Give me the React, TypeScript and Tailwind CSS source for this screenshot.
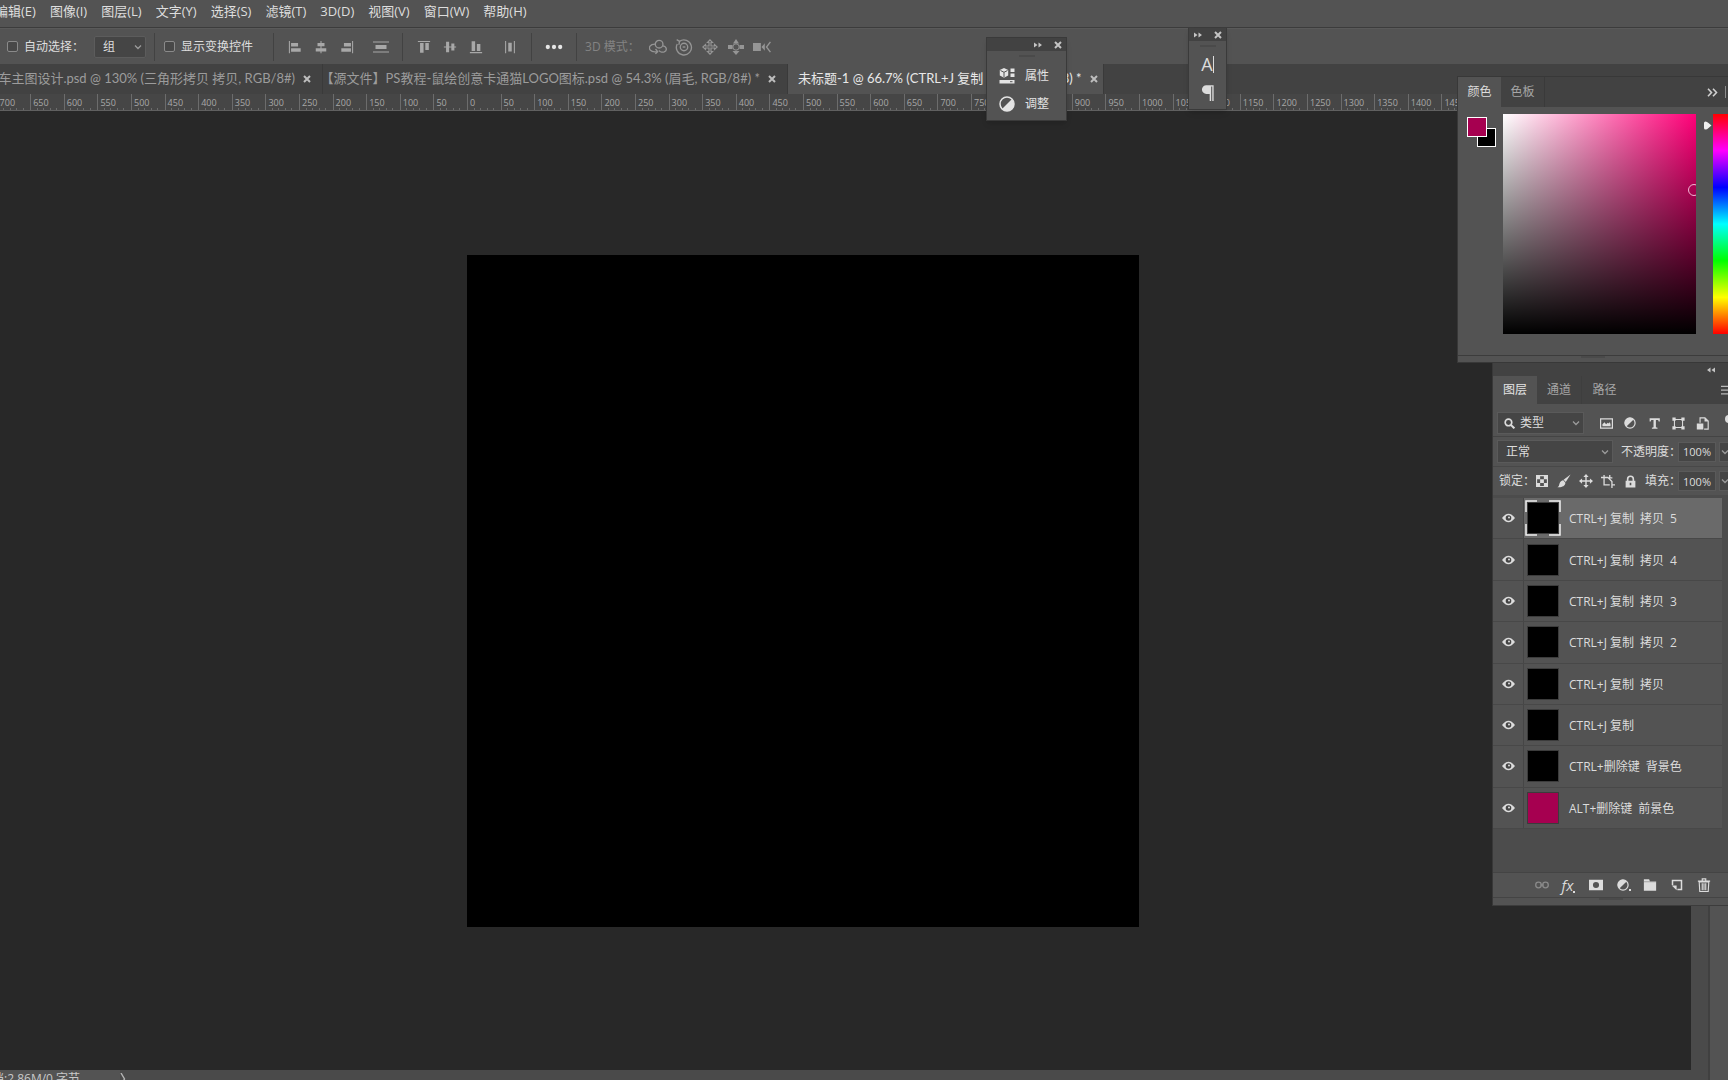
import type { ReactNode } from "react";
import { clsx } from "clsx";

const MENUS = ["编辑(E)", "图像(I)", "图层(L)", "文字(Y)", "选择(S)", "滤镜(T)", "3D(D)", "视图(V)", "窗口(W)", "帮助(H)"];

const LAYERS = [
  { name: ["CTRL+J 复制", "拷贝", "5"], color: "bg-black", selected: true },
  { name: ["CTRL+J 复制", "拷贝", "4"], color: "bg-black" },
  { name: ["CTRL+J 复制", "拷贝", "3"], color: "bg-black" },
  { name: ["CTRL+J 复制", "拷贝", "2"], color: "bg-black" },
  { name: ["CTRL+J 复制", "拷贝"], color: "bg-black" },
  { name: ["CTRL+J 复制"], color: "bg-black" },
  { name: ["CTRL+删除键", "背景色"], color: "bg-black" },
  { name: ["ALT+删除键", "前景色"], color: "bg-[#a60050]" },
];

// 1000px either side of the origin, then the part past the document
const RULER = Array.from({ length: 60 }, (_, i) => Math.abs(i - 20) * 50);

interface IconProps {
  size?: number;
  className?: string;
  children: ReactNode;
}

function Icon({ size = 16, className, children }: IconProps) {
  return (
    <svg width={size} height={size} viewBox="0 0 16 16" fill="currentColor" className={clsx("shrink-0", className)} aria-hidden="true">
      {children}
    </svg>
  );
}

function Chevron({ className }: { className?: string }) {
  return (
    <svg width="8" height="8" viewBox="0 0 8 8" fill="none" stroke="#9b9b9b" strokeWidth="1.3" className={clsx("shrink-0", className)} aria-hidden="true">
      <path d="M1 2.5 4 5.5 7 2.5" />
    </svg>
  );
}

function CloseIcon() {
  return (
    <svg width="8" height="8" viewBox="0 0 8 8" stroke="currentColor" strokeWidth="2" aria-hidden="true">
      <path d="M1 1l6 6M7 1 1 7" />
    </svg>
  );
}

function DoubleArrow({ flip }: { flip?: boolean }) {
  return (
    <svg width="8" height="6" viewBox="0 0 8 6" fill="#c4c4c4" className={clsx(flip && "rotate-180")} aria-hidden="true">
      <path d="M0 0.5 3.5 3 0 5.5zM4.5 0.5 8 3 4.5 5.5z" />
    </svg>
  );
}

function Tool({ label, className, children }: { label: string; className?: string; children: ReactNode }) {
  return (
    <button aria-label={label} className={clsx("flex shrink-0 items-center justify-center", className)}>
      {children}
    </button>
  );
}

function Divider() {
  return <span className="h-7 w-px shrink-0 bg-[#424242]" />;
}

function HalfCircle() {
  return (
    <>
      <circle cx="8" cy="8" r="6.8" fill="none" stroke="currentColor" strokeWidth="1.6" />
      <path d="M12.8 3.2A6.8 6.8 0 1 0 3.2 12.8z" />
    </>
  );
}

function MenuBar() {
  return (
    <nav className="flex h-7 shrink-0 items-center gap-3.5 overflow-hidden border-b border-[#3c3c3c] bg-[#535353] pb-1 text-[13px] text-[#dedede]">
      {MENUS.map((item, i) => (
        <button key={item} className={clsx("shrink-0 whitespace-nowrap", i === 0 && "-ml-[5px]")}>
          {item}
        </button>
      ))}
    </nav>
  );
}

function OptionsBar() {
  return (
    <div className="flex h-9 shrink-0 items-center border-t border-[#5a5a5a] bg-[#535353] text-xs text-[#dedede]">
      <label className="ml-[7px] flex items-center gap-1.5">
        <input type="checkbox" className="size-[11px] appearance-none rounded-xs border border-[#8a8a8a] bg-[#484848]" />
        自动选择：
      </label>
      <div className="relative ml-2.5 flex w-[52px] items-center">
        <select aria-label="自动选择" className="h-[22px] w-full appearance-none rounded-xs border border-[#5c5c5c] bg-[#454545] pl-2 text-xs">
          <option>组</option>
        </select>
        <Chevron className="absolute right-1" />
      </div>
      <div className="mr-[9px] ml-2 flex">
        <Divider />
      </div>
      <label className="flex items-center gap-1.5">
        <input type="checkbox" className="size-[11px] appearance-none rounded-xs border border-[#8a8a8a] bg-[#484848]" />
        显示变换控件
      </label>
      <div className="ml-5 flex">
        <Divider />
      </div>
      <div className="ml-2 flex items-center text-[#a8a8a8]">
        <Tool label="左对齐" className="w-[26px]">
          <Icon size={14}><path d="M1 1h1.2v14H1zM3.5 3.5h8v4h-8zM3.5 9.5h11v4h-11z" /></Icon>
        </Tool>
        <Tool label="水平居中对齐" className="w-[26px]">
          <Icon size={14}><path d="M7.4 1h1.2v14H7.4zM4 3.5h8v3.5H4zM2 9.5h12V13H2z" /></Icon>
        </Tool>
        <Tool label="右对齐" className="w-[26px]">
          <Icon size={14}><path d="M13.8 1H15v14h-1.2zM4.5 3.5h8v4h-8zM1.5 9.5h11v4h-11z" /></Icon>
        </Tool>
        <Tool label="按垂直居中分布" className="w-[42px]">
          <Icon><path d="M0 2.4h16v1.2H0zM0 12.4h16v1.2H0zM2.5 6h11v4h-11z" /></Icon>
        </Tool>
        <Divider />
        <Tool label="顶对齐" className="ml-2 w-[26px]">
          <Icon size={14}><path d="M1 1h14v1.2H1zM3.5 3.5h4v11h-4zM9.5 3.5h4v8h-4z" /></Icon>
        </Tool>
        <Tool label="垂直居中对齐" className="w-[26px]">
          <Icon size={14}><path d="M1 7.4h14v1.2H1zM3.5 2H7v12H3.5zM9.5 4H13v8H9.5z" /></Icon>
        </Tool>
        <Tool label="底对齐" className="w-[26px]">
          <Icon size={14}><path d="M1 13.8h14V15H1zM3 1.5h4v11H3zM9 4.5h4v8H9z" /></Icon>
        </Tool>
        <Tool label="按水平居中分布" className="w-[42px]">
          <Icon size={14}><path d="M2.4 1h1.2v14H2.4zM12.4 1h1.2v14h-1.2zM6 3h4v10H6z" /></Icon>
        </Tool>
        <Divider />
        <Tool label="更多" className="w-11 text-[#e6e6e6]">
          <Icon size={18}><circle cx="2.5" cy="8" r="1.9" /><circle cx="8" cy="8" r="1.9" /><circle cx="13.5" cy="8" r="1.9" /></Icon>
        </Tool>
        <Divider />
      </div>
      <span className="ml-2 text-[#838383]">3D 模式：</span>
      <div className="ml-2 flex items-center gap-1.5 text-[#959595]">
        <Tool label="旋转 3D 对象" className="w-5">
          <Icon size={18}>
            <g fill="none" stroke="currentColor" strokeWidth="1.2">
              <circle cx="9" cy="5.5" r="3.4" />
              <path d="M5.3 5.5C1 5.500-.8 8.500 1.200 10.800c1.300 1.500 3.600 1.700 5.600 1.400M12.500 7c3.500.8 3.800 4.200 1 5.300-2 .7-4 0-4.500-1.300M5.800 9.800l1.900 2.300-2 2" />
            </g>
          </Icon>
        </Tool>
        <Tool label="滚动 3D 对象" className="w-5">
          <Icon size={18}>
            <g fill="none" stroke="currentColor" strokeWidth="1.2">
              <path d="M4 3a6.700 6.700 0 1 1-2 2.300M1.500 1.500 4 3l-.5 3" />
              <circle cx="8" cy="8" r="3.300" />
              <path d="M6.800 8h2.400" />
            </g>
          </Icon>
        </Tool>
        <Tool label="拖动 3D 对象" className="w-5">
          <Icon>
            <path fill="none" stroke="currentColor" strokeWidth="1.2" d="M8 .8 10.500 3.500H9v3.500h3.500V5.500L15.200 8l-2.700 2.500V9H9v3.500h1.500L8 15.200 5.500 12.500H7V9H3.500v1.500L.8 8l2.700-2.500V7H7V3.500H5.500z" />
          </Icon>
        </Tool>
        <Tool label="滑动 3D 对象" className="w-5">
          <Icon>
            <path d="M8 0l3 4.500H5zM8 16l-3.500-4h7zM0 6h4.500v4H0zM11.500 6H16v4h-4.500z" />
            <circle cx="8" cy="8" r="3.200" fill="none" stroke="currentColor" />
          </Icon>
        </Tool>
        <Tool label="缩放 3D 对象" className="w-5">
          <Icon size={18}>
            <path d="M0 4.500h7v7H0zM7.500 8l3-3.300v6.600z" />
            <path fill="none" stroke="currentColor" strokeWidth="1.200" d="M15.500 3.500 12 8l3.500 4.500" />
          </Icon>
        </Tool>
      </div>
    </div>
  );
}

function DocTab({ title, active, className }: { title: string; active?: boolean; className?: string }) {
  return (
    <div
      className={clsx(
        "flex h-full shrink-0 items-center gap-2 border-r border-[#3a3a3a] whitespace-nowrap",
        active ? "bg-[#535353] text-[#e8e8e8]" : "text-[#9c9c9c]",
        className
      )}
    >
      <button>{title}</button>
      <button aria-label="关闭" className="text-[#bdbdbd]">
        <CloseIcon />
      </button>
    </div>
  );
}

function DocumentTabs() {
  return (
    <div className="flex h-[30px] shrink-0 items-center overflow-hidden bg-[#424242] font-['Lato','Noto_Sans_CJK_SC',sans-serif] text-[13px]">
      <div className="flex h-full w-[323px] shrink-0 justify-end">
        <DocTab title="直通车主图设计.psd @ 130% (三角形拷贝 拷贝, RGB/8#)" className="pr-[11px]" />
      </div>
      <div className="flex h-full w-[465px] shrink-0 justify-end">
        <DocTab title="【源文件】PS教程-鼠绘创意卡通猫LOGO图标.psd @ 54.3% (眉毛, RGB/8#) *" className="pr-[11px]" />
      </div>
      <DocTab active title="未标题-1 @ 66.7% (CTRL+J 复制 拷贝 5, RGB/8) *" className="w-[316px] justify-between pr-[11px] pl-[10px]" />
    </div>
  );
}

function Ruler() {
  return (
    <div className="h-[17px] shrink-0 overflow-hidden border-b border-[#606060] bg-[#464646] text-[9px] text-[#a8a8a8]">
      <div className="-ml-[205px] grid h-full w-[2016px] grid-cols-60">
        {RULER.map((value, i) => (
          <div key={i} className="flex flex-col justify-between border-l border-[#6c6c6c] pt-[3px]">
            <span className="pl-0.5 leading-[11px]">{value}</span>
            <span className="grid h-0.5 grid-cols-5">
              {[0, 1, 2, 3].map((tick) => (
                <span key={tick} className="border-r border-[#6c6c6c]" />
              ))}
            </span>
          </div>
        ))}
      </div>
    </div>
  );
}

function PanelHeader() {
  return (
    <div className="flex h-[13px] items-center justify-end gap-3 bg-[#424242] pr-1 text-[#c4c4c4]">
      <Tool label="展开">
        <DoubleArrow />
      </Tool>
      <Tool label="关闭">
        <CloseIcon />
      </Tool>
    </div>
  );
}

function Grip() {
  return <div className="mx-auto mt-1 h-0.5 w-4 bg-[#4a4a4a]" />;
}

function PropertiesPanel() {
  return (
    <section className="absolute top-[37px] left-[986px] h-[84px] w-[81px] border border-[#3a3a3a] bg-[#535353] text-xs text-[#e4e4e4] shadow-md">
      <PanelHeader />
      <Grip />
      <button className="mt-[5px] flex h-7 items-center gap-2.5 pl-3">
        <Icon>
          <path d="M5 0l4.200 2v5.500L5 9.800.8 7.500V2z" />
          <path d="M1.500 2.500 5 4.300l3.500-1.800M5 4.300v5" fill="none" stroke="#535353" strokeWidth="1" />
          <path d="M11.500.5h4v3.500h-4zM11.500 5.500h4V9h-4zM.5 12h15v3.500H.5z" />
          <path d="M11 13.200h2.500v1H11z" fill="#535353" />
        </Icon>
        属性
      </button>
      <button className="flex h-7 items-center gap-2.5 pl-3">
        <Icon>
          <circle cx="8" cy="8" r="7" fill="none" stroke="currentColor" strokeWidth="1.500" />
          <path d="M13 3 3 13a7 7 0 0 0 10-10z" />
        </Icon>
        调整
      </button>
    </section>
  );
}

function CharacterPanel() {
  return (
    <section className="absolute top-7 left-[1188px] h-[82px] w-[39px] border border-t-0 border-[#3a3a3a] bg-[#535353] text-[#dcdcdc] shadow-md">
      <PanelHeader />
      <Grip />
      <button aria-label="字符" className="mx-auto mt-1 flex h-[26px] items-center text-lg leading-none">
        A<span className="h-[17px] w-px bg-[#dcdcdc]" />
      </button>
      <Tool label="段落" className="mx-auto h-8">
        <Icon size={18}><path d="M6.500 1H13v14h-1.200V2.200h-1V15H9.500V8.800h-3a3.900 3.900 0 0 1 0-7.800z" /></Icon>
      </Tool>
    </section>
  );
}

function ColorPanel() {
  return (
    <section className="border border-r-0 border-[#383838] bg-[#535353]">
      <div className="flex h-[30px] items-stretch bg-[#424242] text-xs">
        <button className="w-[43px] bg-[#535353] text-[#dedede]">颜色</button>
        <button className="w-11 border-r border-[#3a3a3a] text-[#a6a6a6]">色板</button>
        <div className="ml-auto flex items-center gap-[7px] pr-0.5">
          <svg width="11" height="9" viewBox="0 0 11 9" fill="none" stroke="#cfcfcf" strokeWidth="1.600" aria-hidden="true">
            <path d="M1 .8 4.500 4.500 1 8.200M6 .8l3.500 3.700L6 8.200" />
          </svg>
          <span className="h-3 w-px bg-[#8c8c8c]" />
        </div>
      </div>
      <div className="flex pt-[7px] pl-[9px]">
        <div className="relative mt-[3px] h-[30px] w-[29px]">
          <button aria-label="背景色" className="absolute right-0 bottom-0 size-[19px] border border-white bg-black" />
          <button aria-label="前景色" className="absolute top-0 left-0 size-5 border border-white bg-[#a60050]" />
        </div>
        <div className="relative ml-[7px] h-[220px] w-[193px] overflow-hidden bg-[linear-gradient(to_top,#000,transparent),linear-gradient(to_right,#fff,#ff0078)]">
          <span className="absolute top-[70px] -right-1 size-3 rounded-full border border-[#f2b8d4]" />
        </div>
        <svg width="8" height="9" viewBox="0 0 8 9" fill="#efefef" className="mt-[7px] ml-2" aria-hidden="true">
          <path d="M0 2Q0 .5 1.500.5q1.500 0 3 1.500L7.500 4.500 4.500 7q-1.500 1.500-3 1.500Q0 8.500 0 7z" />
        </svg>
        <input
          type="range"
          aria-label="色相"
          className="ml-px h-[220px] min-w-0 flex-1 appearance-none bg-[linear-gradient(to_bottom,#f00,#f0f,#00f,#0ff,#0f0,#ff0,#f00)] [&::-webkit-slider-thumb]:opacity-0"
        />
      </div>
      <div className="mt-[21px] flex h-[7px] justify-center border-t border-[#3c3c3c]">
        <span className="h-0.5 w-6 bg-[#4a4a4a]" />
      </div>
    </section>
  );
}

function Percent({ label }: { label: string }) {
  return (
    <>
      <input aria-label={label} defaultValue="100%" className="h-5 w-[38px] border border-[#5a5a5a] bg-[#454545] text-center text-[11px] text-[#dedede]" />
      <Tool label={label + "滑块"} className="ml-[3px] h-5 w-[9px] justify-start! overflow-hidden border border-r-0 border-[#5a5a5a] bg-[#454545] pl-px">
        <Chevron />
      </Tool>
    </>
  );
}

function LayerFilters() {
  return (
    <div className="text-xs text-[#dcdcdc]">
      <div className="flex h-[33px] items-center border-b border-[#444] pt-1.5 pl-1">
        <div className="relative mr-2.5 flex w-[87px] items-center">
          <Icon size={11} className="absolute left-[7px]">
            <circle cx="6.500" cy="6.500" r="4.800" fill="none" stroke="currentColor" strokeWidth="2.400" />
            <path d="m10 10 5 5" stroke="currentColor" strokeWidth="3" />
          </Icon>
          <select aria-label="图层过滤" className="h-[22px] w-full appearance-none border border-[#5a5a5a] bg-[#454545] pl-[22px]">
            <option>类型</option>
          </select>
          <Chevron className="absolute right-1" />
        </div>
        <Tool label="像素图层" className="w-6">
          <Icon size={13}><path fillRule="evenodd" d="M0 1.500h16v13H0zM1.500 3v10h13V3z" /><path d="M3 11.500V9l2.500-2.500L7.500 9l2-2 1.500 1 1-2 1 3v2.500z" /></Icon>
        </Tool>
        <Tool label="调整图层" className="w-6">
          <Icon size={12}><HalfCircle /></Icon>
        </Tool>
        <Tool label="文字图层" className="w-6">
          <Icon size={13}><path d="M2 1.500h12.500V5.500h-1.300l-.7-1.800H9.700v9l2 .6V14.500H4.800v-1.200l2-.6v-9H4L3.300 5.500H2z" /></Icon>
        </Tool>
        <Tool label="形状图层" className="w-6">
          <Icon size={13}>
            <path d="M3 3h10v10H3z" fill="none" stroke="currentColor" strokeWidth="1.300" />
            <path d="M.5.5h4v4h-4zM11.500.5h4v4h-4zM.5 11.500h4v4h-4zM11.500 11.500h4v4h-4z" />
          </Icon>
        </Tool>
        <Tool label="智能对象" className="w-6">
          <Icon size={13}>
            <path d="M5 7V1h6l4 4v10h-5" fill="none" stroke="currentColor" strokeWidth="1.400" />
            <path d="M10.500 1v4.500H15M1 8h8v7.500H1z" />
          </Icon>
        </Tool>
        <Tool label="过滤开关" className="ml-auto h-4 w-[3px] justify-start! overflow-hidden">
          <span className="mb-2 size-2 shrink-0 rounded-full bg-[#dcdcdc]" />
        </Tool>
      </div>
      <div className="flex h-[30px] items-center border-b border-[#484848] pl-1">
        <div className="relative mr-2 flex min-w-0 flex-1 items-center">
          <select aria-label="混合模式" className="h-[23px] w-full appearance-none border border-[#5a5a5a] bg-[#454545] pl-2">
            <option>正常</option>
          </select>
          <Chevron className="absolute right-1" />
        </div>
        <span className="w-[57px] shrink-0 overflow-hidden whitespace-nowrap">不透明度：</span>
        <Percent label="不透明度" />
      </div>
      <div className="flex h-7 items-center pl-1.5">
        <span className="w-8 shrink-0 overflow-hidden whitespace-nowrap">锁定：</span>
        <div className="flex flex-1">
          <Tool label="锁定透明像素" className="w-[22px]">
            <Icon size={12}>
              <path fillRule="evenodd" d="M0 0h16v16H0zM1.500 1.500v13h13v-13z" />
              <path d="M1 1h4.500v4.500H1zM10.500 1H15v4.500h-4.500zM5.500 5.500h5v5h-5zM1 10.500h4.500V15H1zM10.500 10.500H15V15h-4.500z" />
            </Icon>
          </Tool>
          <Tool label="锁定图像像素" className="w-[22px]">
            <Icon size={14}><path d="M15.500.5 7.500 6.500l2.500 2.700zM7.200 7.200 9.600 10C9.500 14 5 15.500.5 15c2-1 1.800-2.500 2.300-4 .7-2.200 2.600-3.800 4.400-3.800z" /></Icon>
          </Tool>
          <Tool label="锁定位置" className="w-[22px]">
            <Icon size={14}><path d="M8 0l3 3.500H8.800v3.700h3.700V5L16 8l-3.500 3V8.800H8.800v3.700H11L8 16l-3-3.500h2.200V8.800H3.500V11L0 8l3.500-3v2.200h3.700V3.500H5z" /></Icon>
          </Tool>
          <Tool label="锁定画板" className="w-[22px]">
            <Icon size={14}><path d="M3.500 1v11.500H10M0 4h8l4.500 4.500V16M16 12.500h-3.500M10 1v3.500h3" fill="none" stroke="currentColor" strokeWidth="1.500" /></Icon>
          </Tool>
          <Tool label="锁定全部" className="w-[22px]">
            <Icon size={13}>
              <path d="M4.500 8V5a3.500 3.500 0 0 1 7 0v3" fill="none" stroke="currentColor" strokeWidth="2" />
              <path fillRule="evenodd" d="M2 7h12v8.500H2zM7 9.500v3h2v-3z" />
            </Icon>
          </Tool>
        </div>
        <span className="w-[33px] shrink-0 overflow-hidden whitespace-nowrap">填充：</span>
        <Percent label="填充" />
      </div>
    </div>
  );
}

function LayerRow({ name, color, selected }: { name: string[]; color: string; selected?: boolean }) {
  return (
    <li className="flex items-stretch border-b border-[#484848]">
      <Tool label="可见性" className="w-[30px] text-[#dcdcdc]">
        <svg width="13" height="10" viewBox="0 0 13 10" aria-hidden="true">
          <path d="M0 5Q6.500-3.500 13 5 6.500 13.500 0 5z" fill="currentColor" />
          <circle cx="6.500" cy="5" r="2.800" fill="#444" />
          <circle cx="7" cy="4.500" r="1" fill="currentColor" />
        </svg>
      </Tool>
      <button className={clsx("flex flex-1 items-center border-l border-[#464646] pl-[3px] text-xs text-[#dcdcdc]", selected && "bg-[#6a6a6a]")}>
        <span className={clsx("relative size-8 shrink-0 border border-[#3c3c3c]", color)}>
          {selected && (
            <svg width="36" height="36" viewBox="0 0 36 36" fill="none" stroke="#f0f0f0" strokeWidth="1.500" className="absolute -top-[3px] -left-[3px] max-w-none" aria-hidden="true">
              <path d="M1 12V1h11M24 1h11v11M35 24v11H24M12 35H1V24" />
            </svg>
          )}
        </span>
        <span className="ml-2.5 flex gap-1.5 pt-0.5 whitespace-nowrap">
          {name.map((part) => (
            <span key={part}>{part}</span>
          ))}
        </span>
      </button>
    </li>
  );
}

function LayersPanel() {
  return (
    <section className="ml-[35px] border-l border-[#383838] bg-[#535353]">
      <div className="flex h-[13px] items-center justify-end bg-[#424242] pr-[13px]">
        <Tool label="折叠">
          <DoubleArrow flip />
        </Tool>
      </div>
      <div className="flex h-7 items-stretch bg-[#424242] text-xs">
        <button className="w-11 bg-[#535353] text-[#e4e4e4]">图层</button>
        <button className="w-[45px] border-r border-[#3e3e3e] text-[#a6a6a6]">通道</button>
        <button className="w-[45px] text-[#a6a6a6]">路径</button>
        <Tool label="面板菜单" className="ml-auto w-[7px] justify-start! overflow-hidden text-[#b8b8b8]">
          <Icon size={10}><path d="M0 1h16v2H0zM0 7h16v2H0zM0 13h16v2H0z" /></Icon>
        </Tool>
      </div>
      <LayerFilters />
      <div className="h-[377px] bg-[#4c4c4c] pt-[3px]">
        <ul className="mr-1.5 grid h-[331px] grid-rows-8 bg-[#535353]">
          {LAYERS.map((layer) => (
            <LayerRow key={layer.name.join(" ")} {...layer} />
          ))}
        </ul>
      </div>
      <div className="flex h-[26px] items-center border-y border-[#444] pl-[35px] text-[#dcdcdc]">
        <Tool label="链接图层" className="w-[27px] text-[#8a8a8a]">
          <Icon size={14}>
            <g fill="none" stroke="currentColor" strokeWidth="1.500">
              <circle cx="4" cy="8" r="3.200" />
              <circle cx="12" cy="8" r="3.200" />
              <path d="M6 8h4" />
            </g>
          </Icon>
        </Tool>
        <Tool label="图层样式" className="w-[27px] items-end! text-[15px] leading-4 italic">
          <span>fx</span>
          <span className="size-0.5 bg-[#dcdcdc]" />
        </Tool>
        <Tool label="图层蒙版" className="w-[27px]">
          <Icon size={14}><path fillRule="evenodd" d="M0 2h16v12H0zM8 4.500a3.500 3.500 0 1 0 0 7 3.500 3.500 0 0 0 0-7z" /></Icon>
        </Tool>
        <Tool label="新建调整图层" className="w-[27px] items-end! pl-0.5">
          <Icon size={12}><HalfCircle /></Icon>
          <span className="size-0.5 bg-[#dcdcdc]" />
        </Tool>
        <Tool label="新建组" className="w-[27px]">
          <Icon size={14}><path d="M1 1.500h6L8 4h7v10.500H1z" /><path d="M1 4.300h14" stroke="#8a8a8a" strokeWidth=".8" /></Icon>
        </Tool>
        <Tool label="新建图层" className="w-[27px]">
          <Icon size={12}>
            <path d="M2 8V2h12v12H8.500" fill="none" stroke="currentColor" strokeWidth="2" />
            <path d="M1 8.500h6.500V15z" />
          </Icon>
        </Tool>
        <Tool label="删除图层" className="w-[27px]">
          <Icon size={14}>
            <path d="M2.500 4.500h11l-.7 11H3.200zM1 3.500h14M6 3V1h4v2M6 6v8M8 6v8M10 6v8" fill="none" stroke="currentColor" strokeWidth="1.300" />
          </Icon>
        </Tool>
      </div>
      <div className="flex h-2 justify-center border-b border-[#3c3c3c]">
        <span className="h-0.5 w-6 bg-[#4a4a4a]" />
      </div>
    </section>
  );
}

function Workspace() {
  return (
    <main className="flex min-h-0 flex-1">
      <div className="flex min-w-0 flex-1 flex-col bg-[#4a4a4a]">
        <div className="mr-[17px] flex min-h-0 flex-1 items-center justify-center overflow-hidden bg-[#282828] pr-[85px]">
          <div className="size-[672px] shrink-0 bg-black" />
        </div>
        <footer className="flex h-2.5 shrink-0 items-start overflow-hidden text-xs leading-[17px] text-[#c8c8c8]">
          <span className="-ml-2 w-32 shrink-0 bg-[#535353] whitespace-nowrap">档:2.86M/0 字节</span>
          <svg width="6" height="12" viewBox="0 0 6 12" fill="none" stroke="#b4b4b4" strokeWidth="1.400" className="mt-[3px]" aria-hidden="true">
            <path d="m1 0 3.500 6L1 12" />
          </svg>
        </footer>
      </div>
      <aside className="w-5 shrink-0 border-l-2 border-[#404040] bg-[#535353]" />
    </main>
  );
}

export default function App() {
  return (
    <div className="relative flex h-screen flex-col overflow-hidden bg-[#535353] font-['Open_Sans','Noto_Sans_CJK_SC',sans-serif]">
      <MenuBar />
      <OptionsBar />
      <DocumentTabs />
      <Ruler />
      <Workspace />
      <PropertiesPanel />
      <CharacterPanel />
      <div className="absolute top-[76px] right-0 w-[271px]">
        <ColorPanel />
        <LayersPanel />
      </div>
    </div>
  );
}
